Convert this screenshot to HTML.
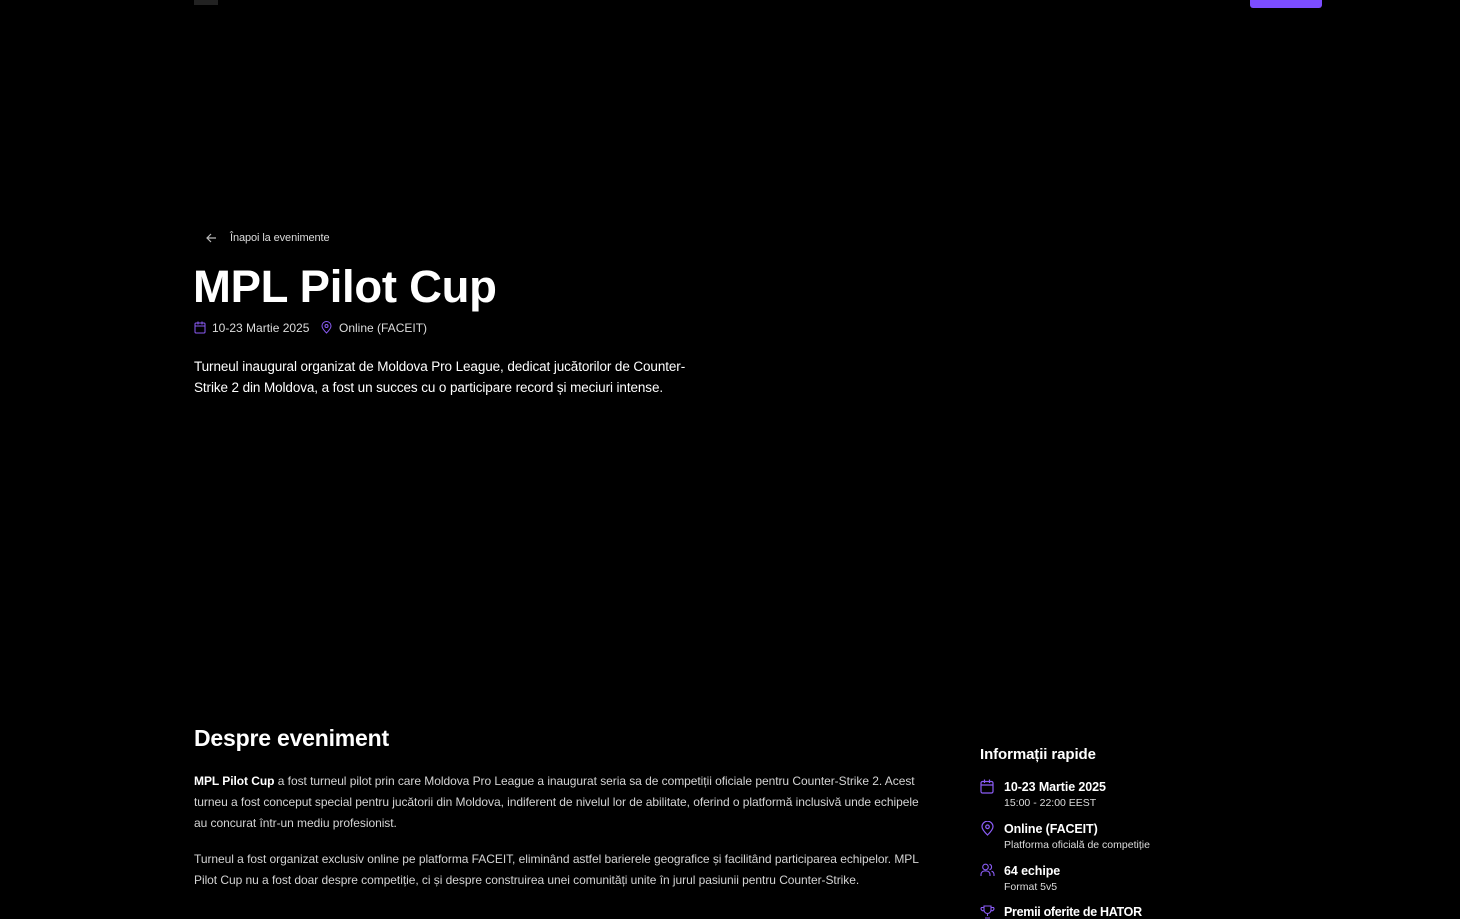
<!DOCTYPE html>
<html><head><meta charset="utf-8"><style>
*{margin:0;padding:0;box-sizing:border-box}
body{width:1460px;height:915px;background:#000;overflow:hidden;position:relative;font-family:"Liberation Sans",sans-serif;color:#fff}
.a{position:absolute;white-space:nowrap}
svg{display:block}
.p{color:#d4d4d4;font-size:12px;line-height:21px;white-space:normal}
</style></head><body>
<div class="a" style="left:194px;top:0;width:24px;height:5px;background:#222"></div>
<div class="a" style="left:1250px;top:0;width:72px;height:8px;background:#7c4dff;border-radius:0 0 3px 3px"></div>

<svg class="a" style="left:206px;top:233px" width="11" height="10" viewBox="0 0 11 10"><path d="M10 5H1M5 1L1 5l4 4" stroke="#bbb" stroke-width="1.2" fill="none"/></svg>
<div class="a" style="left:230px;top:232px;font-size:11px;color:#ddd;letter-spacing:-.1px">Înapoi la evenimente</div>

<div class="a" style="left:193px;top:261px;font-size:45.5px;font-weight:bold;letter-spacing:-.3px">MPL Pilot Cup</div>

<svg class="a" style="left:194px;top:321px" width="12" height="13" viewBox="0 0 12 13"><rect x="1" y="2" width="10" height="10" rx="1" stroke="#8b5cf6" fill="none"/><path d="M1 5h10M4 0.5v3M8 0.5v3" stroke="#8b5cf6"/></svg>
<div class="a" style="left:212px;top:321px;font-size:12px;color:#ddd">10-23 Martie 2025</div>
<svg class="a" style="left:321px;top:321px" width="11" height="13" viewBox="0 0 11 13"><path d="M5.5 12C2.5 9 1 7 1 5a4.5 4.5 0 019 0c0 2-1.5 4-4.5 7z" stroke="#8b5cf6" fill="none"/><circle cx="5.5" cy="5" r="1.5" stroke="#8b5cf6" fill="none"/></svg>
<div class="a" style="left:339px;top:321px;font-size:12px;color:#ddd">Online (FACEIT)</div>

<div class="a" style="left:194px;top:356px;width:505px;font-size:13.5px;line-height:21px;white-space:normal;letter-spacing:-.1px">Turneul inaugural organizat de Moldova Pro League, dedicat jucătorilor de Counter-Strike 2 din Moldova, a fost un succes cu o participare record și meciuri intense.</div>

<div class="a" style="left:194px;top:725px;font-size:23px;font-weight:bold;letter-spacing:-.2px">Despre eveniment</div>
<div class="a p" style="left:194px;top:771px;width:732px;letter-spacing:-.05px"><b style="color:#fff">MPL Pilot Cup</b> a fost turneul pilot prin care Moldova Pro League a inaugurat seria sa de competiții oficiale pentru Counter-Strike 2. Acest turneu a fost conceput special pentru jucătorii din Moldova, indiferent de nivelul lor de abilitate, oferind o platformă inclusivă unde echipele au concurat într-un mediu profesionist.</div>
<div class="a p" style="left:194px;top:849px;width:730px;letter-spacing:-.05px">Turneul a fost organizat exclusiv online pe platforma FACEIT, eliminând astfel barierele geografice și facilitând participarea echipelor. MPL Pilot Cup nu a fost doar despre competiție, ci și despre construirea unei comunități unite în jurul pasiunii pentru Counter-Strike.</div>

<div class="a" style="left:980px;top:746px;font-size:15px;font-weight:bold;letter-spacing:-.1px">Informații rapide</div>

<svg class="a" style="left:980px;top:779px" width="14" height="15" viewBox="0 0 14 15"><rect x="1" y="2.5" width="12" height="11.5" rx="1.5" stroke="#8b5cf6" fill="none" stroke-width="1.2"/><path d="M1 6h12M4.5 0.5v3.5M9.5 0.5v3.5" stroke="#8b5cf6" stroke-width="1.2"/></svg>
<div class="a" style="left:1004px;top:780px;font-size:12.5px;font-weight:bold;letter-spacing:-.1px">10-23 Martie 2025</div>
<div class="a" style="left:1004px;top:797px;font-size:10.5px;color:#ddd">15:00 - 22:00 EEST</div>

<svg class="a" style="left:981px;top:821px" width="13" height="15" viewBox="0 0 13 15"><path d="M6.5 14C3 10.5 1 8 1 5.7a5.5 5.5 0 0111 0C12 8 10 10.5 6.5 14z" stroke="#8b5cf6" fill="none" stroke-width="1.2"/><circle cx="6.5" cy="5.8" r="1.8" stroke="#8b5cf6" fill="none" stroke-width="1.2"/></svg>
<div class="a" style="left:1004px;top:822px;font-size:12.5px;font-weight:bold;letter-spacing:-.1px">Online (FACEIT)</div>
<div class="a" style="left:1004px;top:839px;font-size:10.5px;color:#ddd">Platforma oficială de competiție</div>

<svg class="a" style="left:980px;top:863px" width="15" height="14" viewBox="0 0 15 14"><circle cx="5.5" cy="4" r="2.8" stroke="#8b5cf6" fill="none" stroke-width="1.1"/><path d="M1 13v-1.5A3.5 3.5 0 014.5 8h2A3.5 3.5 0 0110 11.5V13M9.5 1.3a2.8 2.8 0 010 5.4M11.5 8.2A3.5 3.5 0 0114 11.5V13" stroke="#8b5cf6" fill="none" stroke-width="1.1"/></svg>
<div class="a" style="left:1004px;top:864px;font-size:12.5px;font-weight:bold;letter-spacing:-.1px">64 echipe</div>
<div class="a" style="left:1004px;top:881px;font-size:10.5px;color:#ddd">Format 5v5</div>

<svg class="a" style="left:980px;top:905px" width="15" height="14" viewBox="0 0 15 14"><path d="M4 1h7v4a3.5 3.5 0 01-7 0zM4 2.5H1.5a2 2 0 002.5 3M11 2.5h2.5a2 2 0 01-2.5 3M7.5 8.5V11M5 13h5" stroke="#8b5cf6" fill="none" stroke-width="1.1"/></svg>
<div class="a" style="left:1004px;top:905px;font-size:12.5px;font-weight:bold;letter-spacing:-.3px">Premii oferite de HATOR</div>
</body></html>
